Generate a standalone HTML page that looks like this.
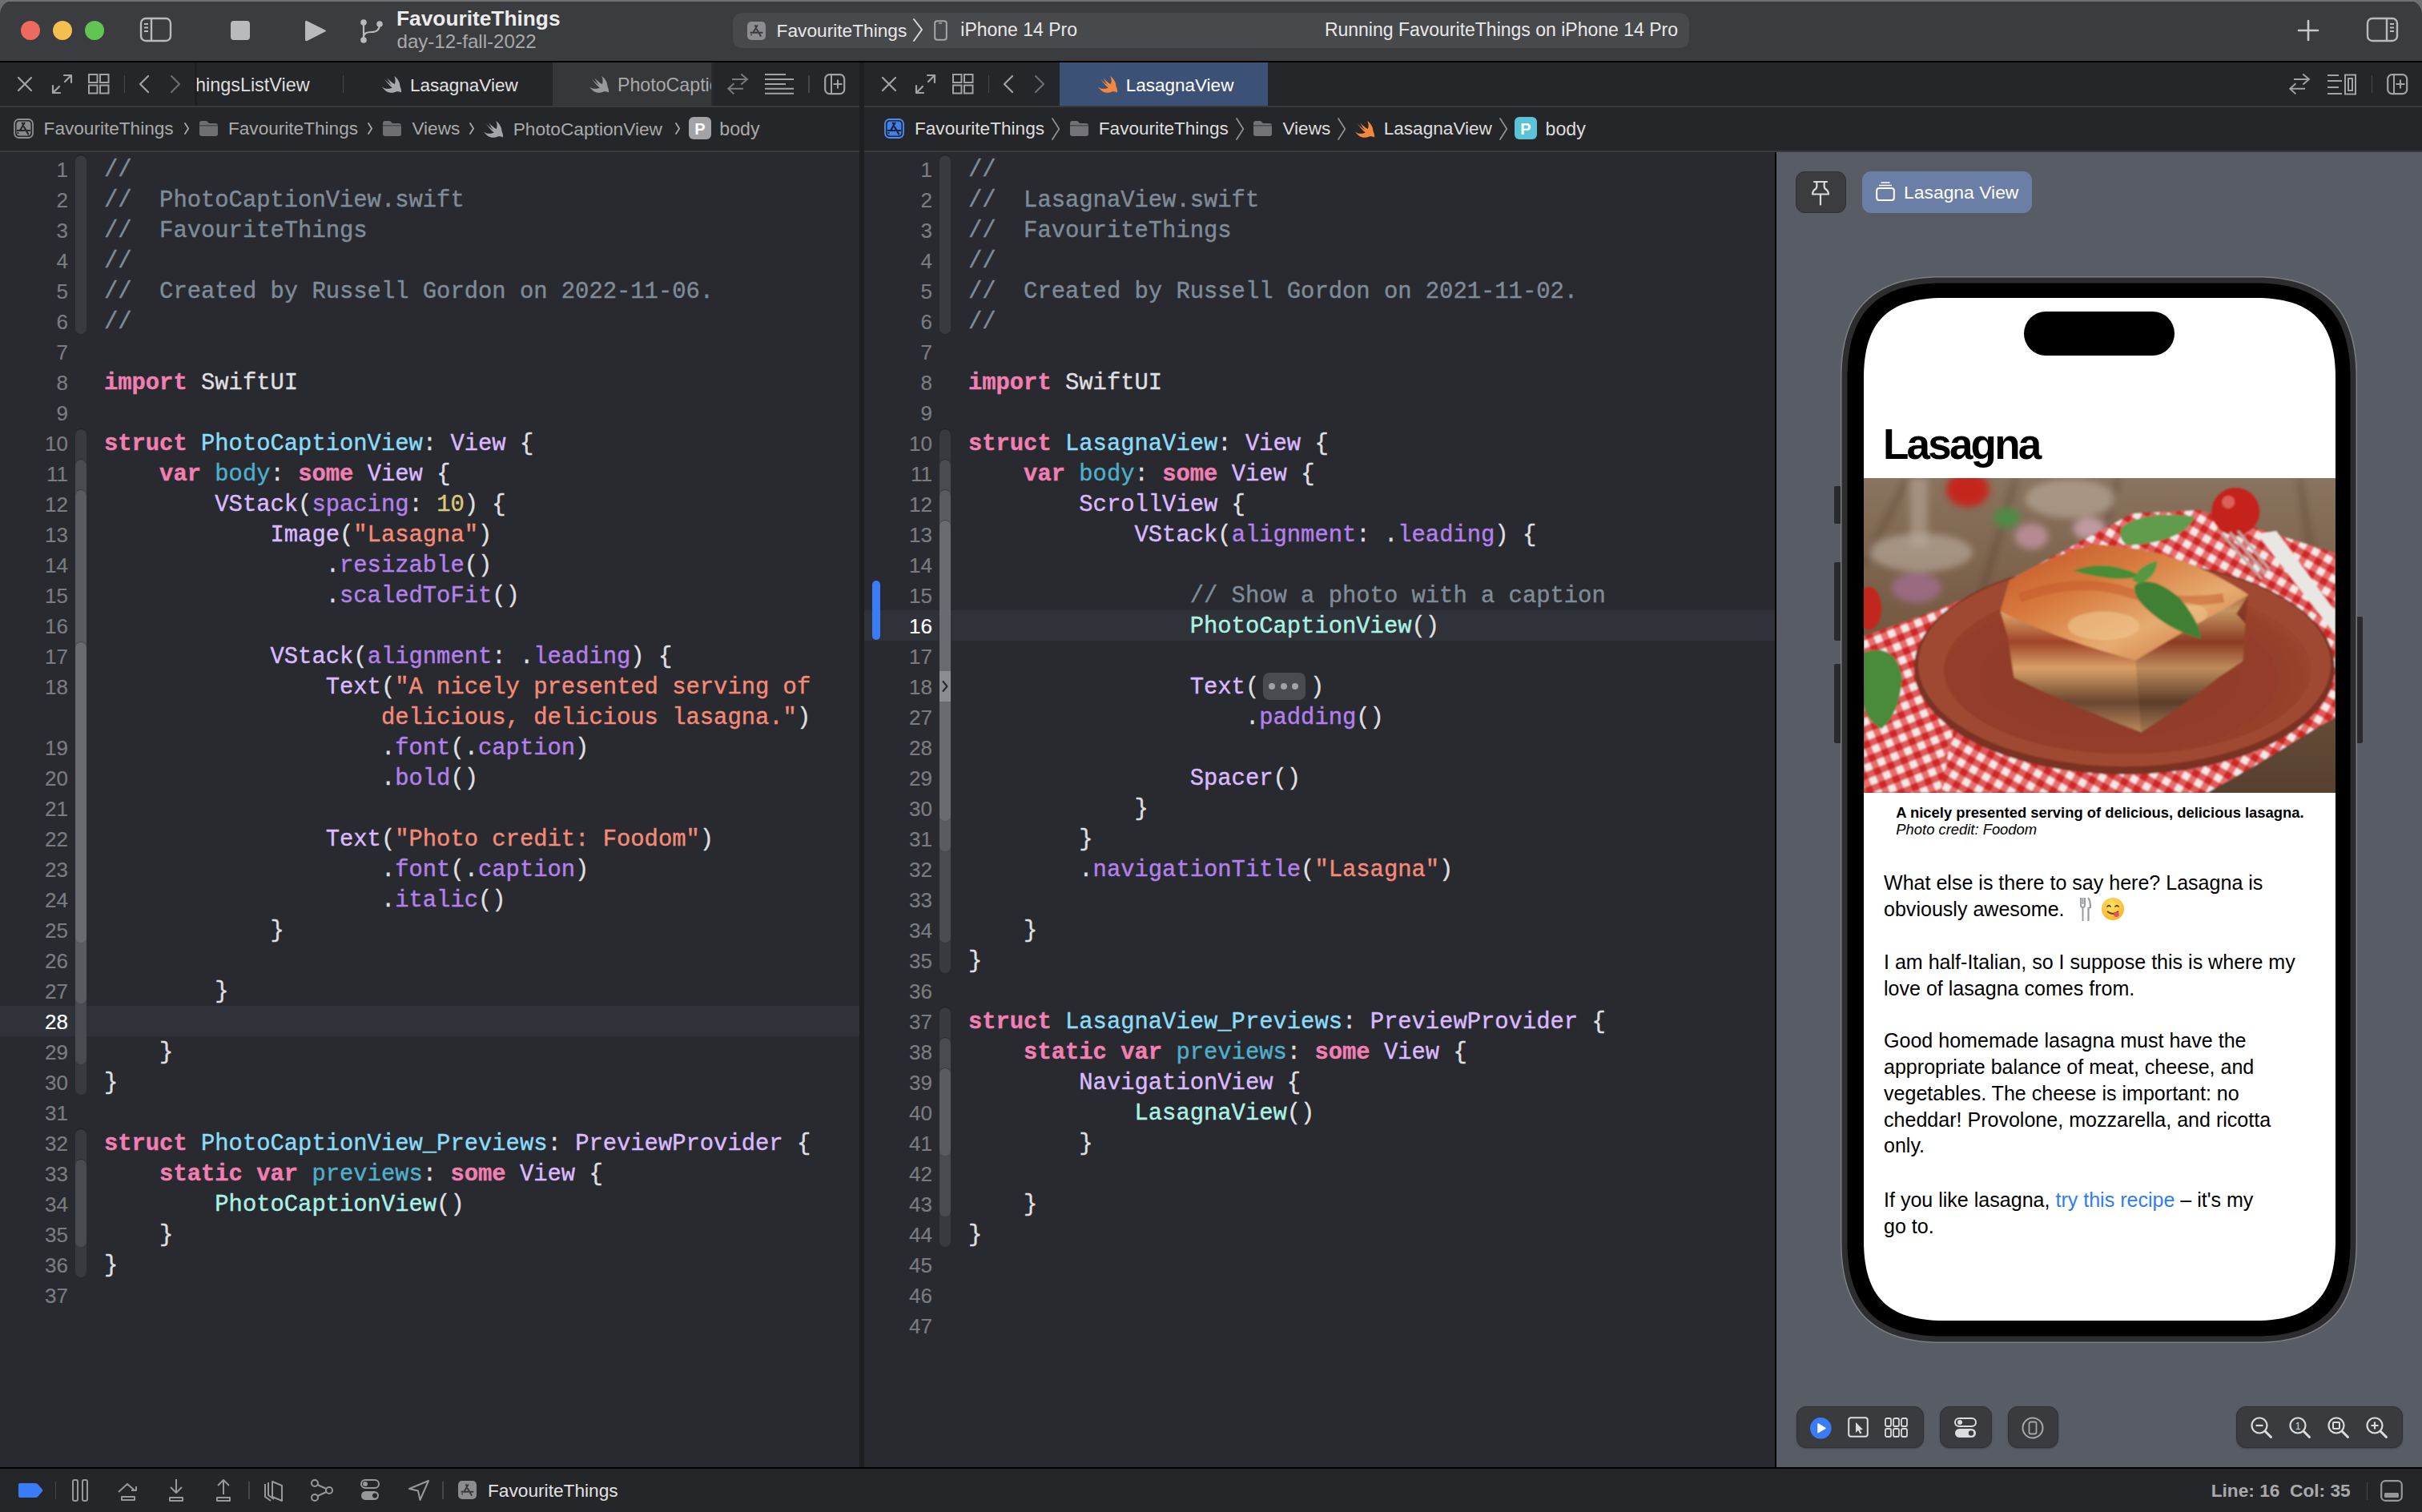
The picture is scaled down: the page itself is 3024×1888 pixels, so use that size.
<!DOCTYPE html><html><head><meta charset="utf-8"><style>
*{margin:0;padding:0;box-sizing:border-box}
html,body{width:3024px;height:1888px;overflow:hidden;background:#6d6e71}
body{position:relative;font-family:"Liberation Sans",sans-serif;-webkit-font-smoothing:antialiased}
.a{position:absolute}
.mono{font-family:"Liberation Mono",monospace}
.row{position:absolute;height:38px;line-height:38px;white-space:pre;font-family:"Liberation Mono",monospace;font-size:28.83px;color:#DFDFE0;-webkit-text-stroke:0.4px currentColor}
.ln{position:absolute;height:38px;line-height:38px;text-align:right;font-size:26px;color:#7b7c80;width:80px;-webkit-text-stroke:0.2px currentColor}
.ln.cur{color:#ffffff}
.c{color:#7F8C98}.k{color:#F07FB2;font-weight:bold}.s{color:#F48A77}.n{color:#D9C97C}
.td{color:#8ADCF8}.od{color:#4EB0CC}.pc{color:#ACF2E4}.oc{color:#DABAFF}.of{color:#B281EB}
.ui{font-family:"Liberation Sans",sans-serif;white-space:pre;position:absolute}
svg{position:absolute;overflow:visible}
</style></head><body><div class="a" style="left:0px;top:0px;width:3024px;height:76px;background:#3b3c3f;border-radius:18px 18px 0 0;"></div><div class="a" style="left:0px;top:76px;width:3024px;height:2px;background:#000;"></div><div class="a" style="left:0px;top:78px;width:3024px;height:56px;background:#252629;"></div><div class="a" style="left:0px;top:132px;width:3024px;height:2px;background:#393a3e;"></div><div class="a" style="left:0px;top:134px;width:3024px;height:56px;background:#252629;"></div><div class="a" style="left:0px;top:188px;width:3024px;height:2px;background:#393a3e;"></div><div class="a" style="left:0px;top:190px;width:3024px;height:1642px;background:#292A30;"></div><div class="a" style="left:0px;top:1832px;width:3024px;height:2px;background:#000;"></div><div class="a" style="left:0px;top:1834px;width:3024px;height:54px;background:#252629;"></div><div class="a" style="left:1073px;top:78px;width:6px;height:1754px;background:#1f1f21;"></div><div class="a" style="left:2216px;top:190px;width:808px;height:1642px;background:#585c64;"></div><div class="a" style="left:2216px;top:190px;width:2px;height:1642px;background:#000;"></div><div class="a" style="left:0px;top:1256px;width:1073px;height:38px;background:#2F3239;"></div><div class="a" style="left:1079px;top:762px;width:1137px;height:38px;background:#2F3239;"></div><div class="a" style="left:94px;top:194px;width:14px;height:223px;background:#393a3f;border-radius:7px;box-shadow:0 -1px 0 rgba(0,0,0,.25);"></div><div class="a" style="left:94px;top:536px;width:14px;height:831px;background:#393a3f;border-radius:7px;box-shadow:0 -1px 0 rgba(0,0,0,.25);"></div><div class="a" style="left:94px;top:1410px;width:14px;height:185px;background:#393a3f;border-radius:7px;box-shadow:0 -1px 0 rgba(0,0,0,.25);"></div><div class="a" style="left:94px;top:574px;width:14px;height:755px;background:#4a4b50;border-radius:7px;box-shadow:0 -1px 0 rgba(0,0,0,.25);"></div><div class="a" style="left:94px;top:1448px;width:14px;height:109px;background:#4a4b50;border-radius:7px;box-shadow:0 -1px 0 rgba(0,0,0,.25);"></div><div class="a" style="left:94px;top:612px;width:14px;height:641px;background:#5a5b60;border-radius:7px;box-shadow:0 -1px 0 rgba(0,0,0,.25);"></div><div class="a" style="left:94px;top:802px;width:14px;height:375px;background:#6a6b70;border-radius:7px;box-shadow:0 -1px 0 rgba(0,0,0,.25);"></div><div class="a" style="left:1173px;top:194px;width:14px;height:223px;background:#393a3f;border-radius:7px;box-shadow:0 -1px 0 rgba(0,0,0,.25);"></div><div class="a" style="left:1173px;top:536px;width:14px;height:679px;background:#393a3f;border-radius:7px;box-shadow:0 -1px 0 rgba(0,0,0,.25);"></div><div class="a" style="left:1173px;top:1258px;width:14px;height:299px;background:#393a3f;border-radius:7px;box-shadow:0 -1px 0 rgba(0,0,0,.25);"></div><div class="a" style="left:1173px;top:574px;width:14px;height:603px;background:#4a4b50;border-radius:7px;box-shadow:0 -1px 0 rgba(0,0,0,.25);"></div><div class="a" style="left:1173px;top:1296px;width:14px;height:223px;background:#4a4b50;border-radius:7px;box-shadow:0 -1px 0 rgba(0,0,0,.25);"></div><div class="a" style="left:1173px;top:612px;width:14px;height:451px;background:#5a5b60;border-radius:7px;box-shadow:0 -1px 0 rgba(0,0,0,.25);"></div><div class="a" style="left:1173px;top:1334px;width:14px;height:109px;background:#5a5b60;border-radius:7px;box-shadow:0 -1px 0 rgba(0,0,0,.25);"></div><div class="a" style="left:1173px;top:650px;width:14px;height:375px;background:#6a6b70;border-radius:7px;box-shadow:0 -1px 0 rgba(0,0,0,.25);"></div><div class="a" style="left:1173px;top:838px;width:14px;height:38px;background:#8b8c90;"></div><svg style="left:1173px;top:838px" width="14" height="38"><path d="M4.5 13 L9.5 19 L4.5 25" stroke="#26272b" stroke-width="2" fill="none" stroke-linecap="round" stroke-linejoin="round"/></svg><div class="a" style="left:1088.5px;top:725px;width:10.3px;height:74px;background:#3a7cf5;border-radius:5px;"></div><div class="ln" style="left:5px;top:193px">1</div><div class="row" style="left:129.9px;top:194px"><span class="c">//</span></div><div class="ln" style="left:5px;top:231px">2</div><div class="row" style="left:129.9px;top:232px"><span class="c">//  PhotoCaptionView.swift</span></div><div class="ln" style="left:5px;top:269px">3</div><div class="row" style="left:129.9px;top:270px"><span class="c">//  FavouriteThings</span></div><div class="ln" style="left:5px;top:307px">4</div><div class="row" style="left:129.9px;top:308px"><span class="c">//</span></div><div class="ln" style="left:5px;top:345px">5</div><div class="row" style="left:129.9px;top:346px"><span class="c">//  Created by Russell Gordon on 2022-11-06.</span></div><div class="ln" style="left:5px;top:383px">6</div><div class="row" style="left:129.9px;top:384px"><span class="c">//</span></div><div class="ln" style="left:5px;top:421px">7</div><div class="ln" style="left:5px;top:459px">8</div><div class="row" style="left:129.9px;top:460px"><span class="k">import</span> SwiftUI</div><div class="ln" style="left:5px;top:497px">9</div><div class="ln" style="left:5px;top:535px">10</div><div class="row" style="left:129.9px;top:536px"><span class="k">struct</span> <span class="td">PhotoCaptionView</span>: <span class="oc">View</span> {</div><div class="ln" style="left:5px;top:573px">11</div><div class="row" style="left:129.9px;top:574px">    <span class="k">var</span> <span class="od">body</span>: <span class="k">some</span> <span class="oc">View</span> {</div><div class="ln" style="left:5px;top:611px">12</div><div class="row" style="left:129.9px;top:612px">        <span class="oc">VStack</span>(<span class="of">spacing</span>: <span class="n">10</span>) {</div><div class="ln" style="left:5px;top:649px">13</div><div class="row" style="left:129.9px;top:650px">            <span class="oc">Image</span>(<span class="s">"Lasagna"</span>)</div><div class="ln" style="left:5px;top:687px">14</div><div class="row" style="left:129.9px;top:688px">                .<span class="of">resizable</span>()</div><div class="ln" style="left:5px;top:725px">15</div><div class="row" style="left:129.9px;top:726px">                .<span class="of">scaledToFit</span>()</div><div class="ln" style="left:5px;top:763px">16</div><div class="ln" style="left:5px;top:801px">17</div><div class="row" style="left:129.9px;top:802px">            <span class="oc">VStack</span>(<span class="of">alignment</span>: .<span class="of">leading</span>) {</div><div class="ln" style="left:5px;top:839px">18</div><div class="row" style="left:129.9px;top:840px">                <span class="oc">Text</span>(<span class="s">"A nicely presented serving of</span></div><div class="row" style="left:129.9px;top:878px">                    <span class="s">delicious, delicious lasagna."</span>)</div><div class="ln" style="left:5px;top:915px">19</div><div class="row" style="left:129.9px;top:916px">                    .<span class="of">font</span>(.<span class="of">caption</span>)</div><div class="ln" style="left:5px;top:953px">20</div><div class="row" style="left:129.9px;top:954px">                    .<span class="of">bold</span>()</div><div class="ln" style="left:5px;top:991px">21</div><div class="ln" style="left:5px;top:1029px">22</div><div class="row" style="left:129.9px;top:1030px">                <span class="oc">Text</span>(<span class="s">"Photo credit: Foodom"</span>)</div><div class="ln" style="left:5px;top:1067px">23</div><div class="row" style="left:129.9px;top:1068px">                    .<span class="of">font</span>(.<span class="of">caption</span>)</div><div class="ln" style="left:5px;top:1105px">24</div><div class="row" style="left:129.9px;top:1106px">                    .<span class="of">italic</span>()</div><div class="ln" style="left:5px;top:1143px">25</div><div class="row" style="left:129.9px;top:1144px">            }</div><div class="ln" style="left:5px;top:1181px">26</div><div class="ln" style="left:5px;top:1219px">27</div><div class="row" style="left:129.9px;top:1220px">        }</div><div class="ln cur" style="left:5px;top:1257px">28</div><div class="ln" style="left:5px;top:1295px">29</div><div class="row" style="left:129.9px;top:1296px">    }</div><div class="ln" style="left:5px;top:1333px">30</div><div class="row" style="left:129.9px;top:1334px">}</div><div class="ln" style="left:5px;top:1371px">31</div><div class="ln" style="left:5px;top:1409px">32</div><div class="row" style="left:129.9px;top:1410px"><span class="k">struct</span> <span class="td">PhotoCaptionView_Previews</span>: <span class="oc">PreviewProvider</span> {</div><div class="ln" style="left:5px;top:1447px">33</div><div class="row" style="left:129.9px;top:1448px">    <span class="k">static</span> <span class="k">var</span> <span class="od">previews</span>: <span class="k">some</span> <span class="oc">View</span> {</div><div class="ln" style="left:5px;top:1485px">34</div><div class="row" style="left:129.9px;top:1486px">        <span class="pc">PhotoCaptionView</span>()</div><div class="ln" style="left:5px;top:1523px">35</div><div class="row" style="left:129.9px;top:1524px">    }</div><div class="ln" style="left:5px;top:1561px">36</div><div class="row" style="left:129.9px;top:1562px">}</div><div class="ln" style="left:5px;top:1599px">37</div><div class="ln" style="left:1084px;top:193px">1</div><div class="row" style="left:1208.9px;top:194px"><span class="c">//</span></div><div class="ln" style="left:1084px;top:231px">2</div><div class="row" style="left:1208.9px;top:232px"><span class="c">//  LasagnaView.swift</span></div><div class="ln" style="left:1084px;top:269px">3</div><div class="row" style="left:1208.9px;top:270px"><span class="c">//  FavouriteThings</span></div><div class="ln" style="left:1084px;top:307px">4</div><div class="row" style="left:1208.9px;top:308px"><span class="c">//</span></div><div class="ln" style="left:1084px;top:345px">5</div><div class="row" style="left:1208.9px;top:346px"><span class="c">//  Created by Russell Gordon on 2021-11-02.</span></div><div class="ln" style="left:1084px;top:383px">6</div><div class="row" style="left:1208.9px;top:384px"><span class="c">//</span></div><div class="ln" style="left:1084px;top:421px">7</div><div class="ln" style="left:1084px;top:459px">8</div><div class="row" style="left:1208.9px;top:460px"><span class="k">import</span> SwiftUI</div><div class="ln" style="left:1084px;top:497px">9</div><div class="ln" style="left:1084px;top:535px">10</div><div class="row" style="left:1208.9px;top:536px"><span class="k">struct</span> <span class="td">LasagnaView</span>: <span class="oc">View</span> {</div><div class="ln" style="left:1084px;top:573px">11</div><div class="row" style="left:1208.9px;top:574px">    <span class="k">var</span> <span class="od">body</span>: <span class="k">some</span> <span class="oc">View</span> {</div><div class="ln" style="left:1084px;top:611px">12</div><div class="row" style="left:1208.9px;top:612px">        <span class="oc">ScrollView</span> {</div><div class="ln" style="left:1084px;top:649px">13</div><div class="row" style="left:1208.9px;top:650px">            <span class="oc">VStack</span>(<span class="of">alignment</span>: .<span class="of">leading</span>) {</div><div class="ln" style="left:1084px;top:687px">14</div><div class="ln" style="left:1084px;top:725px">15</div><div class="row" style="left:1208.9px;top:726px">                <span class="c">// Show a photo with a caption</span></div><div class="ln cur" style="left:1084px;top:763px">16</div><div class="row" style="left:1208.9px;top:764px">                <span class="pc">PhotoCaptionView</span>()</div><div class="ln" style="left:1084px;top:801px">17</div><div class="ln" style="left:1084px;top:839px">18</div><div class="row" style="left:1208.9px;top:840px">                <span class="oc">Text</span>(</div><div class="ln" style="left:1084px;top:877px">27</div><div class="row" style="left:1208.9px;top:878px">                    .<span class="of">padding</span>()</div><div class="ln" style="left:1084px;top:915px">28</div><div class="ln" style="left:1084px;top:953px">29</div><div class="row" style="left:1208.9px;top:954px">                <span class="oc">Spacer</span>()</div><div class="ln" style="left:1084px;top:991px">30</div><div class="row" style="left:1208.9px;top:992px">            }</div><div class="ln" style="left:1084px;top:1029px">31</div><div class="row" style="left:1208.9px;top:1030px">        }</div><div class="ln" style="left:1084px;top:1067px">32</div><div class="row" style="left:1208.9px;top:1068px">        .<span class="of">navigationTitle</span>(<span class="s">"Lasagna"</span>)</div><div class="ln" style="left:1084px;top:1105px">33</div><div class="ln" style="left:1084px;top:1143px">34</div><div class="row" style="left:1208.9px;top:1144px">    }</div><div class="ln" style="left:1084px;top:1181px">35</div><div class="row" style="left:1208.9px;top:1182px">}</div><div class="ln" style="left:1084px;top:1219px">36</div><div class="ln" style="left:1084px;top:1257px">37</div><div class="row" style="left:1208.9px;top:1258px"><span class="k">struct</span> <span class="td">LasagnaView_Previews</span>: <span class="oc">PreviewProvider</span> {</div><div class="ln" style="left:1084px;top:1295px">38</div><div class="row" style="left:1208.9px;top:1296px">    <span class="k">static</span> <span class="k">var</span> <span class="od">previews</span>: <span class="k">some</span> <span class="oc">View</span> {</div><div class="ln" style="left:1084px;top:1333px">39</div><div class="row" style="left:1208.9px;top:1334px">        <span class="oc">NavigationView</span> {</div><div class="ln" style="left:1084px;top:1371px">40</div><div class="row" style="left:1208.9px;top:1372px">            <span class="pc">LasagnaView</span>()</div><div class="ln" style="left:1084px;top:1409px">41</div><div class="row" style="left:1208.9px;top:1410px">        }</div><div class="ln" style="left:1084px;top:1447px">42</div><div class="ln" style="left:1084px;top:1485px">43</div><div class="row" style="left:1208.9px;top:1486px">    }</div><div class="ln" style="left:1084px;top:1523px">44</div><div class="row" style="left:1208.9px;top:1524px">}</div><div class="ln" style="left:1084px;top:1561px">45</div><div class="ln" style="left:1084px;top:1599px">46</div><div class="ln" style="left:1084px;top:1637px">47</div><div class="a" style="left:1576.6px;top:840px;width:53.2px;height:34px;background:#4a4b50;border-radius:8px;"></div><div class="a" style="left:1584.0px;top:853px;width:8px;height:8px;border-radius:4px;background:#a1a2a6"></div><div class="a" style="left:1598.5px;top:853px;width:8px;height:8px;border-radius:4px;background:#a1a2a6"></div><div class="a" style="left:1613.0px;top:853px;width:8px;height:8px;border-radius:4px;background:#a1a2a6"></div><div class="row" style="left:1636px;top:840px">)</div><div class="a" style="left:0px;top:0px;width:3024px;height:2px;background:#6f7072;"></div><div class="a" style="left:26px;top:26px;width:24px;height:24px;border-radius:12px;background:#ed6a5e"></div><div class="a" style="left:66px;top:26px;width:24px;height:24px;border-radius:12px;background:#f5bf4f"></div><div class="a" style="left:106px;top:26px;width:24px;height:24px;border-radius:12px;background:#61c554"></div><svg style="left:174px;top:21px;" width="41" height="32" viewBox="0 0 41 32"><rect x="2" y="2" width="37" height="28" rx="6" stroke="#b9babd" stroke-width="2.4" fill="none"/><path d="M15 2 L15 30" stroke="#b9babd" stroke-width="2.4"/><path d="M6 9 L11 9 M6 13.5 L11 13.5 M6 18 L11 18" stroke="#b9babd" stroke-width="1.8"/></svg><div class="a" style="left:288px;top:26px;width:24px;height:24px;background:#b9babd;border-radius:4px;"></div><svg style="left:380px;top:23px;" width="30" height="31" viewBox="0 0 30 31"><path d="M3 3 Q1 2 1 5 L1 26 Q1 29 3.5 28 L26 16.5 Q28 15.5 26 14.5 Z" fill="#b9babd"/></svg><svg style="left:448px;top:22px;" width="32" height="34" viewBox="0 0 32 34"><circle cx="6" cy="6" r="3.8" fill="#b9babd"/><circle cx="26" cy="8" r="3.8" fill="#b9babd"/><circle cx="6" cy="28" r="3.8" fill="#b9babd"/><path d="M6 6 L6 28 M26 8 Q26 18 16 18 Q6 18 6 24" stroke="#b9babd" stroke-width="2.2" fill="none"/></svg><div class="ui" style="left:495px;top:9.74px;font-size:26.3px;line-height:26.3px;color:#ececec;font-weight:bold;font-style:normal;">FavouriteThings</div><div class="ui" style="left:495.5px;top:39.5px;font-size:24.1px;line-height:24.1px;color:#a9a9ab;font-weight:normal;font-style:normal;">day-12-fall-2022</div><div class="a" style="left:915px;top:16px;width:1194px;height:44px;background:#48494c;border-radius:12px;"></div><svg style="left:933px;top:27px;" width="23" height="23" viewBox="0 0 23 23"><rect x="0" y="0" width="23" height="23" rx="5.06" fill="#8d8d90"/><path d="M12.420000000000002 5.06 L7.36 13.799999999999999 M9.89 5.06 L11.04 6.8999999999999995 M11.96 9.66 L16.79 17.94 M4.37 13.799999999999999 L12.420000000000002 13.799999999999999 M14.49 13.799999999999999 L18.630000000000003 13.799999999999999" stroke="#3a3a3d" stroke-width="1.955" stroke-linecap="round"/><circle cx="5.06" cy="16.56" r="1.035" fill="#3a3a3d"/></svg><div class="ui" style="left:969.6px;top:26.58px;font-size:22.7px;line-height:22.7px;color:#e8e8e8;font-weight:normal;font-style:normal;">FavouriteThings</div><svg style="left:1139px;top:22px;" width="14" height="32" viewBox="0 0 14 32"><path d="M2 2 L12 15 L2 29" stroke="#d8d8da" stroke-width="2" fill="none" stroke-linecap="round"/></svg><svg style="left:1166px;top:25px;" width="18" height="26" viewBox="0 0 18 26"><rect x="1.2" y="1.2" width="14.6" height="23.6" rx="3" stroke="#a5a5a8" stroke-width="2" fill="none"/><path d="M6 4 L10 4" stroke="#a5a5a8" stroke-width="1.5"/></svg><div class="ui" style="left:1199.3px;top:26.33px;font-size:23.0px;line-height:23.0px;color:#e8e8e8;font-weight:normal;font-style:normal;">iPhone 14 Pro</div><div class="ui" style="left:1500px;width:595px;text-align:right;top:26.330499999999994px;font-size:23px;line-height:23px;color:#e8e8e8">Running FavouriteThings on iPhone 14 Pro</div><svg style="left:2868px;top:24px;" width="28" height="28" viewBox="0 0 28 28"><path d="M14 2 L14 26 M2 14 L26 14" stroke="#c8c8ca" stroke-width="2.6" stroke-linecap="round"/></svg><svg style="left:2954px;top:21px;" width="41" height="32" viewBox="0 0 41 32"><rect x="2" y="2" width="37" height="28" rx="6" stroke="#b9babd" stroke-width="2.4" fill="none"/><path d="M26 2 L26 30" stroke="#b9babd" stroke-width="2.4"/><path d="M30 9 L35 9 M30 13.5 L35 13.5 M30 18 L35 18" stroke="#b9babd" stroke-width="1.8"/></svg><svg style="left:21px;top:95px;" width="20" height="20" viewBox="0 0 20 20"><path d="M2 2 L18 18 M18 2 L2 18" stroke="#a3a3a6" stroke-width="2.2" stroke-linecap="round"/></svg><svg style="left:64px;top:92px;" width="27" height="26" viewBox="0 0 27 26"><path d="M16 2 L25 2 L25 11 M25 2 L17 10 M2 15 L2 24 L11 24 M2 24 L10 16" stroke="#a3a3a6" stroke-width="2.2" fill="none" stroke-linecap="round" stroke-linejoin="round"/></svg><svg style="left:110px;top:92px;" width="27" height="26" viewBox="0 0 27 26"><rect x="1" y="1.0" width="10.5" height="10" stroke="#a3a3a6" stroke-width="2" fill="none"/><rect x="1" y="14.5" width="10.5" height="10" stroke="#a3a3a6" stroke-width="2" fill="none"/><rect x="15" y="1.0" width="10.5" height="10" stroke="#a3a3a6" stroke-width="2" fill="none"/><rect x="15" y="14.5" width="10.5" height="10" stroke="#a3a3a6" stroke-width="2" fill="none"/></svg><div class="a" style="left:154.5px;top:94px;width:1.6px;height:22px;background:#47484c;"></div><svg style="left:173px;top:93px;" width="14" height="24" viewBox="0 0 14 24"><path d="M12 2 L2 12 L12 22" stroke="#a3a3a6" stroke-width="2.2" fill="none" stroke-linecap="round" stroke-linejoin="round"/></svg><svg style="left:212px;top:93px;" width="14" height="24" viewBox="0 0 14 24"><path d="M2 2 L12 12 L2 22" stroke="#6e6e72" stroke-width="2.2" fill="none" stroke-linecap="round" stroke-linejoin="round"/></svg><div class="a" style="left:689.5px;top:78px;width:201px;height:54px;background:#363739;"></div><div class="ui" style="left:244px;top:94.99px;font-size:23.4px;line-height:23.4px;color:#dedede;font-weight:normal;font-style:normal;">hingsListView</div><div class="a" style="left:243px;top:78px;width:3px;height:54px;background:#1c1c1f;opacity:.7;"></div><div class="a" style="left:427.5px;top:94px;width:1.6px;height:22px;background:#47484c;"></div><svg style="left:476.5px;top:95px;" width="24.5" height="21" viewBox="0 0 24.5 21"><g transform="scale(1.0 1.0)"><path d="M15.2 0 C19.5 3 22.5 8 22.4 12.4 C23.5 15 24.5 18 24 20.5 C22 19.5 20 19 18.1 19.3 C15 20.5 13 21 10.9 20.8 C8 20.5 5.5 19.5 3.8 17.7 C2.5 16.5 1 15 0 13.4 C2 14.8 4 15.6 6.2 15.8 C8.5 16 11 15.5 12.8 14.6 C9 11.5 5.5 7 2.8 3.4 C6 6.5 9 9 12 11.5 C9.5 8.5 8 5 6.2 2.2 C9.5 5.5 12.5 8.5 15.9 10 C17 7 16.8 3 15.2 0 Z" fill="#a9a9ab"/></g></svg><div class="ui" style="left:512px;top:95.75px;font-size:22.5px;line-height:22.5px;color:#e2e2e2;font-weight:normal;font-style:normal;">LasagnaView</div><svg style="left:736px;top:95px;" width="24.5" height="21" viewBox="0 0 24.5 21"><g transform="scale(1.0 1.0)"><path d="M15.2 0 C19.5 3 22.5 8 22.4 12.4 C23.5 15 24.5 18 24 20.5 C22 19.5 20 19 18.1 19.3 C15 20.5 13 21 10.9 20.8 C8 20.5 5.5 19.5 3.8 17.7 C2.5 16.5 1 15 0 13.4 C2 14.8 4 15.6 6.2 15.8 C8.5 16 11 15.5 12.8 14.6 C9 11.5 5.5 7 2.8 3.4 C6 6.5 9 9 12 11.5 C9.5 8.5 8 5 6.2 2.2 C9.5 5.5 12.5 8.5 15.9 10 C17 7 16.8 3 15.2 0 Z" fill="#9a9a9c"/></g></svg><div class="a" style="left:771px;top:78px;width:119px;height:54px;overflow:hidden"><div class="ui" style="left:0px;top:17.16px;font-size:23.2px;line-height:23.2px;color:#a8a8aa;font-weight:normal;font-style:normal;">PhotoCaptionView</div></div><div class="a" style="left:888px;top:78px;width:3px;height:54px;background:#2a2b2e;"></div><svg style="left:908px;top:92px;" width="27" height="27" viewBox="0 0 27 27"><path d="M6 7 L25 7 M17.3 0.5 L25 7 L17.3 13.5 M20 18.8 L1.2 18.8 M8.4 12.2 L1.2 18.8 L8.4 25.4" stroke="#7c7c80" stroke-width="1.9" fill="none" stroke-linecap="butt" stroke-linejoin="miter"/></svg><svg style="left:954px;top:92px;" width="38" height="27" viewBox="0 0 38 27"><path d="M1 1 L27 1 M1 7 L37 7 M1 12.9 L27 12.9 M1 18.8 L37 18.8 M1 24.8 L37 24.8" stroke="#a3a3a6" stroke-width="2"/></svg><div class="a" style="left:1009px;top:94px;width:1.6px;height:22px;background:#47484c;"></div><svg style="left:1028.5px;top:92px;" width="27" height="27" viewBox="0 0 27 27"><rect x="1.2" y="1.2" width="24" height="24" rx="5.5" stroke="#a3a3a6" stroke-width="2.2" fill="none"/><path d="M9 1 L9 25.5 M17 7.5 L17 18.5 M11.5 13 L22.5 13" stroke="#a3a3a6" stroke-width="2"/></svg><svg style="left:1100px;top:95px;" width="20" height="20" viewBox="0 0 20 20"><path d="M2 2 L18 18 M18 2 L2 18" stroke="#a3a3a6" stroke-width="2.2" stroke-linecap="round"/></svg><svg style="left:1142px;top:92px;" width="27" height="26" viewBox="0 0 27 26"><path d="M16 2 L25 2 L25 11 M25 2 L17 10 M2 15 L2 24 L11 24 M2 24 L10 16" stroke="#a3a3a6" stroke-width="2.2" fill="none" stroke-linecap="round" stroke-linejoin="round"/></svg><svg style="left:1189px;top:92px;" width="27" height="26" viewBox="0 0 27 26"><rect x="1" y="1.0" width="10.5" height="10" stroke="#a3a3a6" stroke-width="2" fill="none"/><rect x="1" y="14.5" width="10.5" height="10" stroke="#a3a3a6" stroke-width="2" fill="none"/><rect x="15" y="1.0" width="10.5" height="10" stroke="#a3a3a6" stroke-width="2" fill="none"/><rect x="15" y="14.5" width="10.5" height="10" stroke="#a3a3a6" stroke-width="2" fill="none"/></svg><div class="a" style="left:1233.5px;top:94px;width:1.6px;height:22px;background:#47484c;"></div><svg style="left:1252px;top:93px;" width="14" height="24" viewBox="0 0 14 24"><path d="M12 2 L2 12 L12 22" stroke="#a3a3a6" stroke-width="2.2" fill="none" stroke-linecap="round" stroke-linejoin="round"/></svg><svg style="left:1291px;top:93px;" width="14" height="24" viewBox="0 0 14 24"><path d="M2 2 L12 12 L2 22" stroke="#6e6e72" stroke-width="2.2" fill="none" stroke-linecap="round" stroke-linejoin="round"/></svg><div class="a" style="left:1322.8px;top:78px;width:260px;height:54px;background:#3b5176;"></div><svg style="left:1370.5px;top:95px;" width="24.5" height="21" viewBox="0 0 24.5 21"><g transform="scale(1.0 1.0)"><path d="M15.2 0 C19.5 3 22.5 8 22.4 12.4 C23.5 15 24.5 18 24 20.5 C22 19.5 20 19 18.1 19.3 C15 20.5 13 21 10.9 20.8 C8 20.5 5.5 19.5 3.8 17.7 C2.5 16.5 1 15 0 13.4 C2 14.8 4 15.6 6.2 15.8 C8.5 16 11 15.5 12.8 14.6 C9 11.5 5.5 7 2.8 3.4 C6 6.5 9 9 12 11.5 C9.5 8.5 8 5 6.2 2.2 C9.5 5.5 12.5 8.5 15.9 10 C17 7 16.8 3 15.2 0 Z" fill="#f0883e"/></g></svg><div class="ui" style="left:1405.7px;top:95.75px;font-size:22.5px;line-height:22.5px;color:#ffffff;font-weight:normal;font-style:normal;">LasagnaView</div><svg style="left:2858px;top:92px;" width="27" height="27" viewBox="0 0 27 27"><path d="M6 7 L25 7 M17.3 0.5 L25 7 L17.3 13.5 M20 18.8 L1.2 18.8 M8.4 12.2 L1.2 18.8 L8.4 25.4" stroke="#a3a3a6" stroke-width="1.9" fill="none" stroke-linecap="butt" stroke-linejoin="miter"/></svg><svg style="left:2905px;top:92px;" width="38" height="27" viewBox="0 0 38 27"><path d="M1 2 L15 2 M1 9 L19 9 M1 17 L15 17 M1 25 L19 25" stroke="#a3a3a6" stroke-width="2"/><rect x="23" y="1.5" width="13" height="24" stroke="#a3a3a6" stroke-width="2" fill="none"/><rect x="27" y="6" width="5" height="15" stroke="#a3a3a6" stroke-width="2" fill="none"/></svg><div class="a" style="left:2960.5px;top:94px;width:1.6px;height:22px;background:#47484c;"></div><svg style="left:2980px;top:92px;" width="27" height="27" viewBox="0 0 27 27"><rect x="1.2" y="1.2" width="24" height="24" rx="5.5" stroke="#a3a3a6" stroke-width="2.2" fill="none"/><path d="M9 1 L9 25.5 M17 7.5 L17 18.5 M11.5 13 L22.5 13" stroke="#a3a3a6" stroke-width="2"/></svg><svg style="left:17px;top:148px;" width="25" height="25" viewBox="0 0 25 25"><rect x="1" y="1" width="23" height="23" rx="5.5" fill="none" stroke="#8e8e91" stroke-width="1.8"/><rect x="3.6" y="3.6" width="17.8" height="17.8" rx="3.8499999999999996" fill="#8a8a8d"/><path d="M13.5 5.5 L8.0 15.0 M10.75 5.5 L12.0 7.5 M13.0 10.5 L18.25 19.5 M4.75 15.0 L13.5 15.0 M15.75 15.0 L20.25 15.0" stroke="#26272b" stroke-width="2.125" stroke-linecap="round"/><circle cx="5.5" cy="18.0" r="1.125" fill="#26272b"/></svg><div class="ui" style="left:54.6px;top:150.17px;font-size:22.6px;line-height:22.6px;color:#a9a9ab;font-weight:normal;font-style:normal;">FavouriteThings</div><svg style="left:229.5px;top:153px;" width="6.16" height="15" viewBox="0 0 6.16 15"><path d="M1 1 L5.16 7.5 L1 14" stroke="#a9a9ab" stroke-width="1.8" fill="none" stroke-linecap="round" stroke-linejoin="round"/></svg><svg style="left:247.5px;top:150px;" width="25" height="21" viewBox="0 0 25 21"><path d="M1 4 Q1 1 4 1 L9 1 Q11 1 12 3 L13 4 L21 4 Q24 4 24 7 L24 17 Q24 20 21 20 L4 20 Q1 20 1 17 Z" fill="#6f6f73"/><rect x="1" y="6" width="23" height="1.5" fill="#252629" opacity=".5"/></svg><div class="ui" style="left:285px;top:150.17px;font-size:22.6px;line-height:22.6px;color:#a9a9ab;font-weight:normal;font-style:normal;">FavouriteThings</div><svg style="left:459px;top:153px;" width="6.16" height="15" viewBox="0 0 6.16 15"><path d="M1 1 L5.16 7.5 L1 14" stroke="#a9a9ab" stroke-width="1.8" fill="none" stroke-linecap="round" stroke-linejoin="round"/></svg><svg style="left:477px;top:150px;" width="25" height="21" viewBox="0 0 25 21"><path d="M1 4 Q1 1 4 1 L9 1 Q11 1 12 3 L13 4 L21 4 Q24 4 24 7 L24 17 Q24 20 21 20 L4 20 Q1 20 1 17 Z" fill="#6f6f73"/><rect x="1" y="6" width="23" height="1.5" fill="#252629" opacity=".5"/></svg><div class="ui" style="left:514.4px;top:150.17px;font-size:22.6px;line-height:22.6px;color:#a9a9ab;font-weight:normal;font-style:normal;">Views</div><svg style="left:585.5px;top:153px;" width="6.16" height="15" viewBox="0 0 6.16 15"><path d="M1 1 L5.16 7.5 L1 14" stroke="#a9a9ab" stroke-width="1.8" fill="none" stroke-linecap="round" stroke-linejoin="round"/></svg><svg style="left:603.5px;top:151px;" width="24.5" height="21" viewBox="0 0 24.5 21"><g transform="scale(1.0 1.0)"><path d="M15.2 0 C19.5 3 22.5 8 22.4 12.4 C23.5 15 24.5 18 24 20.5 C22 19.5 20 19 18.1 19.3 C15 20.5 13 21 10.9 20.8 C8 20.5 5.5 19.5 3.8 17.7 C2.5 16.5 1 15 0 13.4 C2 14.8 4 15.6 6.2 15.8 C8.5 16 11 15.5 12.8 14.6 C9 11.5 5.5 7 2.8 3.4 C6 6.5 9 9 12 11.5 C9.5 8.5 8 5 6.2 2.2 C9.5 5.5 12.5 8.5 15.9 10 C17 7 16.8 3 15.2 0 Z" fill="#a5a5a7"/></g></svg><div class="ui" style="left:640.7px;top:150.08px;font-size:22.7px;line-height:22.7px;color:#a9a9ab;font-weight:normal;font-style:normal;">PhotoCaptionView</div><svg style="left:843px;top:153px;" width="6.16" height="15" viewBox="0 0 6.16 15"><path d="M1 1 L5.16 7.5 L1 14" stroke="#a9a9ab" stroke-width="1.8" fill="none" stroke-linecap="round" stroke-linejoin="round"/></svg><svg style="left:860.4px;top:146px;" width="28" height="28" viewBox="0 0 28 28"><rect width="28" height="28" rx="6" fill="#a3a3a5"/><text x="14" y="21.5" text-anchor="middle" font-family="Liberation Sans" font-weight="bold" font-size="20" fill="#fff">P</text></svg><div class="ui" style="left:898.3px;top:149.66px;font-size:23.2px;line-height:23.2px;color:#a9a9ab;font-weight:normal;font-style:normal;">body</div><svg style="left:1104px;top:148px;" width="25" height="25" viewBox="0 0 25 25"><rect x="1" y="1" width="23" height="23" rx="5.5" fill="none" stroke="#4b8cf6" stroke-width="1.8"/><rect x="3.6" y="3.6" width="17.8" height="17.8" rx="3.8499999999999996" fill="#3f80ec"/><path d="M13.5 5.5 L8.0 15.0 M10.75 5.5 L12.0 7.5 M13.0 10.5 L18.25 19.5 M4.75 15.0 L13.5 15.0 M15.75 15.0 L20.25 15.0" stroke="#1b2236" stroke-width="2.125" stroke-linecap="round"/><circle cx="5.5" cy="18.0" r="1.125" fill="#1b2236"/></svg><div class="ui" style="left:1142px;top:150.17px;font-size:22.6px;line-height:22.6px;color:#dddddf;font-weight:normal;font-style:normal;">FavouriteThings</div><svg style="left:1312.5px;top:146.5px;" width="10.32" height="28" viewBox="0 0 10.32 28"><path d="M1 1 L9.32 14.0 L1 27" stroke="#8f8f92" stroke-width="1.8" fill="none" stroke-linecap="round" stroke-linejoin="round"/></svg><svg style="left:1334.6px;top:150px;" width="25" height="21" viewBox="0 0 25 21"><path d="M1 4 Q1 1 4 1 L9 1 Q11 1 12 3 L13 4 L21 4 Q24 4 24 7 L24 17 Q24 20 21 20 L4 20 Q1 20 1 17 Z" fill="#737377"/><rect x="1" y="6" width="23" height="1.5" fill="#252629" opacity=".5"/></svg><div class="ui" style="left:1371.8px;top:150.17px;font-size:22.6px;line-height:22.6px;color:#dddddf;font-weight:normal;font-style:normal;">FavouriteThings</div><svg style="left:1543px;top:146.5px;" width="10.32" height="28" viewBox="0 0 10.32 28"><path d="M1 1 L9.32 14.0 L1 27" stroke="#8f8f92" stroke-width="1.8" fill="none" stroke-linecap="round" stroke-linejoin="round"/></svg><svg style="left:1564px;top:150px;" width="25" height="21" viewBox="0 0 25 21"><path d="M1 4 Q1 1 4 1 L9 1 Q11 1 12 3 L13 4 L21 4 Q24 4 24 7 L24 17 Q24 20 21 20 L4 20 Q1 20 1 17 Z" fill="#737377"/><rect x="1" y="6" width="23" height="1.5" fill="#252629" opacity=".5"/></svg><div class="ui" style="left:1601.4px;top:150.17px;font-size:22.6px;line-height:22.6px;color:#dddddf;font-weight:normal;font-style:normal;">Views</div><svg style="left:1669.5px;top:146.5px;" width="10.32" height="28" viewBox="0 0 10.32 28"><path d="M1 1 L9.32 14.0 L1 27" stroke="#8f8f92" stroke-width="1.8" fill="none" stroke-linecap="round" stroke-linejoin="round"/></svg><svg style="left:1691.5px;top:151px;" width="24.5" height="21" viewBox="0 0 24.5 21"><g transform="scale(1.0 1.0)"><path d="M15.2 0 C19.5 3 22.5 8 22.4 12.4 C23.5 15 24.5 18 24 20.5 C22 19.5 20 19 18.1 19.3 C15 20.5 13 21 10.9 20.8 C8 20.5 5.5 19.5 3.8 17.7 C2.5 16.5 1 15 0 13.4 C2 14.8 4 15.6 6.2 15.8 C8.5 16 11 15.5 12.8 14.6 C9 11.5 5.5 7 2.8 3.4 C6 6.5 9 9 12 11.5 C9.5 8.5 8 5 6.2 2.2 C9.5 5.5 12.5 8.5 15.9 10 C17 7 16.8 3 15.2 0 Z" fill="#f0883e"/></g></svg><div class="ui" style="left:1727.7px;top:150.17px;font-size:22.6px;line-height:22.6px;color:#dddddf;font-weight:normal;font-style:normal;">LasagnaView</div><svg style="left:1872px;top:146.5px;" width="10.32" height="28" viewBox="0 0 10.32 28"><path d="M1 1 L9.32 14.0 L1 27" stroke="#8f8f92" stroke-width="1.8" fill="none" stroke-linecap="round" stroke-linejoin="round"/></svg><svg style="left:1891.4px;top:146px;" width="28" height="28" viewBox="0 0 28 28"><rect width="28" height="28" rx="6" fill="#5ac4d6"/><text x="14" y="21.5" text-anchor="middle" font-family="Liberation Sans" font-weight="bold" font-size="20" fill="#fff">P</text></svg><div class="ui" style="left:1929.5px;top:149.66px;font-size:23.2px;line-height:23.2px;color:#dddddf;font-weight:normal;font-style:normal;">body</div><svg style="left:22px;top:1851px;" width="32" height="20" viewBox="0 0 32 20"><path d="M3 1 L22 1 Q24 1 25.5 2.5 L31 9 Q32 10 31 11 L25.5 17.5 Q24 19 22 19 L3 19 Q1 19 1 17 L1 3 Q1 1 3 1 Z" fill="#3a7cf5"/></svg><div class="a" style="left:68.5px;top:1850px;width:1.6px;height:22px;background:#46474b;"></div><svg style="left:90px;top:1847px;" width="21" height="28" viewBox="0 0 21 28"><rect x="1" y="1" width="6" height="26" rx="2" stroke="#98989b" stroke-width="2" fill="none"/><rect x="13" y="1" width="6" height="26" rx="2" stroke="#98989b" stroke-width="2" fill="none"/></svg><svg style="left:146px;top:1847px;" width="29" height="28" viewBox="0 0 29 28"><path d="M2 16 L13 6 L22 14 M18 14 L24 14 L24 9 M6 22 L22 22 L22 26 L6 26 Z" stroke="#98989b" stroke-width="2" fill="none" stroke-linejoin="round"/></svg><svg style="left:210px;top:1846px;" width="21" height="30" viewBox="0 0 21 30"><path d="M10 1 L10 18 M3 11 L10 18 L17 11 M2 24 L18 24 L18 28 L2 28 Z" stroke="#98989b" stroke-width="2" fill="none" stroke-linejoin="round"/></svg><svg style="left:269px;top:1846px;" width="21" height="30" viewBox="0 0 21 30"><path d="M10 20 L10 2 M3 9 L10 2 L17 9 M2 24 L18 24 L18 28 L2 28 Z" stroke="#98989b" stroke-width="2" fill="none" stroke-linejoin="round"/></svg><div class="a" style="left:310px;top:1850px;width:1.6px;height:22px;background:#46474b;"></div><svg style="left:329px;top:1847px;" width="26" height="29" viewBox="0 0 26 29"><path d="M2 6 L2 22 L9 27 M6 4 L6 20 L13 25 M11 3 L23 8 L23 27 L11 22 Z" stroke="#98989b" stroke-width="2" fill="none" stroke-linejoin="round"/></svg><svg style="left:387px;top:1846px;" width="30" height="30" viewBox="0 0 30 30"><circle cx="6" cy="6" r="4" stroke="#98989b" stroke-width="2" fill="none"/><circle cx="6" cy="24" r="4" stroke="#98989b" stroke-width="2" fill="none"/><circle cx="24" cy="15" r="4" stroke="#98989b" stroke-width="2" fill="none"/><path d="M9.5 8 L20.5 13 M9.5 22 L20.5 17" stroke="#98989b" stroke-width="2"/></svg><svg style="left:450px;top:1847px;" width="25" height="27" viewBox="0 0 25 27"><rect x="1" y="1" width="22" height="10" rx="5" stroke="#98989b" stroke-width="2" fill="none"/><circle cx="6" cy="6" r="3" fill="#98989b"/><rect x="1" y="15" width="22" height="11" rx="5.5" fill="#98989b"/><circle cx="18" cy="20.5" r="3" fill="#252629"/></svg><svg style="left:509px;top:1847px;" width="28" height="28" viewBox="0 0 28 28"><path d="M26 2 L2 12 L13 14.5 L15.5 26 Z" stroke="#98989b" stroke-width="2" fill="none" stroke-linejoin="round"/></svg><div class="a" style="left:552px;top:1850px;width:1.6px;height:22px;background:#46474b;"></div><svg style="left:571.8px;top:1849px;" width="23" height="23" viewBox="0 0 23 23"><rect x="0" y="0" width="23" height="23" rx="5.06" fill="#8d8d90"/><path d="M12.420000000000002 5.06 L7.36 13.799999999999999 M9.89 5.06 L11.04 6.8999999999999995 M11.96 9.66 L16.79 17.94 M4.37 13.799999999999999 L12.420000000000002 13.799999999999999 M14.49 13.799999999999999 L18.630000000000003 13.799999999999999" stroke="#3a3a3d" stroke-width="1.955" stroke-linecap="round"/><circle cx="5.06" cy="16.56" r="1.035" fill="#3a3a3d"/></svg><div class="ui" style="left:609px;top:1849.58px;font-size:22.7px;line-height:22.7px;color:#e2e2e2;font-weight:normal;font-style:normal;">FavouriteThings</div><div class="ui" style="left:2760.7px;top:1849.78px;font-size:22.7px;line-height:22.7px;color:#a9a9ab;font-weight:bold;font-style:normal;">Line: 16  Col: 35</div><div class="a" style="left:2954.5px;top:1851px;width:1.6px;height:22px;background:#46474b;"></div><svg style="left:2972px;top:1848px;" width="28" height="27" viewBox="0 0 28 27"><rect x="1.2" y="1.2" width="25.6" height="24.6" rx="5" stroke="#98989b" stroke-width="2.2" fill="none"/><rect x="5" y="16" width="18" height="6" rx="1.5" fill="#98989b"/></svg><div class="a" style="left:2242px;top:213.6px;width:62.5px;height:52.4px;background:#3b3c3e;border-radius:11px;border:1px solid #2e2f31;"></div><svg style="left:2259px;top:225px;" width="28" height="32" viewBox="0 0 28 32"><path d="M6 2 L22 2 M9 2 Q10 8 8.5 10.5 Q4 13 4 17.5 L24 17.5 Q24 13 19.5 10.5 Q18 8 19 2 M14 17.5 L14 30.5" stroke="#dcdcde" stroke-width="2.2" fill="none" stroke-linejoin="round" stroke-linecap="round"/></svg><div class="a" style="left:2324.7px;top:213.6px;width:212.6px;height:52.4px;background:#6a7ea6;border-radius:11px;"></div><svg style="left:2342px;top:226px;" width="25" height="25" viewBox="0 0 25 25"><rect x="1.2" y="9" width="21.6" height="15" rx="3" stroke="#fff" stroke-width="2" fill="none"/><path d="M4 5.5 L20 5.5 M6.5 2 L17.5 2" stroke="#fff" stroke-width="1.6"/></svg><div class="ui" style="left:2377px;top:228.82px;font-size:22.9px;line-height:22.9px;color:#ffffff;font-weight:normal;font-style:normal;">Lasagna View</div><div class="a" style="left:2290px;top:607px;width:9px;height:47px;background:#2a2a2c;border-radius:2px;"></div><div class="a" style="left:2290px;top:702px;width:9px;height:98px;background:#2a2a2c;border-radius:2px;"></div><div class="a" style="left:2290px;top:828.5px;width:9px;height:99px;background:#2a2a2c;border-radius:2px;"></div><div class="a" style="left:2942px;top:770px;width:8px;height:158px;background:#2a2a2c;border-radius:2px;"></div><svg style="left:2290px;top:340px;" width="670" height="1345" viewBox="0 0 670 1345"><path d="M134 5 H527 C613 5 653 45 653 131 V1211 C653 1297 613 1337 527 1337 H134 C48 1337 8 1297 8 1211 V131 C8 45 48 5 134 5 Z" fill="#7d7e80"/><path d="M134.0 6.5 H527.0 C612.0 6.5 651.5 46.0 651.5 131.0 V1211.0 C651.5 1296.0 612.0 1335.5 527.0 1335.5 H134.0 C49.0 1335.5 9.5 1296.0 9.5 1211.0 V131.0 C9.5 46.0 49.0 6.5 134.0 6.5 Z" fill="#2d2d2f"/><path d="M134.5 13.5 H526.5 C607.5 13.5 644.5 50.5 644.5 131.5 V1210.5 C644.5 1291.5 607.5 1328.5 526.5 1328.5 H134.5 C53.5 1328.5 16.5 1291.5 16.5 1210.5 V131.5 C16.5 50.5 53.5 13.5 134.5 13.5 Z" fill="#000"/><path d="M137 32 H526 C596 32 626 62 626 132 V1209 C626 1279 596 1309 526 1309 H137 C67 1309 37 1279 37 1209 V132 C37 62 67 32 137 32 Z" fill="#fff"/></svg><div class="a" style="left:2527px;top:389px;width:188px;height:55px;background:#000;border-radius:27.5px;"></div><div class="ui" style="left:2351px;top:528.14px;font-size:53px;line-height:53px;color:#000;font-weight:bold;font-style:normal;letter-spacing:-2.8px;">Lasagna</div><svg style="left:2327px;top:596.5px;overflow:hidden" width="589" height="393" viewBox="0 0 590 394" preserveAspectRatio="none">
<defs>
<pattern id="chk" width="18" height="18" patternUnits="userSpaceOnUse" patternTransform="rotate(30)">
<rect width="18" height="18" fill="#f2e9e7"/><rect width="9" height="9" fill="#d02828"/><rect x="9" y="0" width="9" height="9" fill="#e05a5a"/><rect x="0" y="9" width="9" height="9" fill="#e86e6e"/>
</pattern>
<pattern id="chk2" width="18" height="18" patternUnits="userSpaceOnUse" patternTransform="rotate(-22)">
<rect width="18" height="18" fill="#f2e9e7"/><rect width="9" height="9" fill="#d02828"/><rect x="9" y="0" width="9" height="9" fill="#e05a5a"/><rect x="0" y="9" width="9" height="9" fill="#e86e6e"/>
</pattern>
<linearGradient id="wood" x1="0" y1="0" x2="0" y2="1"><stop offset="0" stop-color="#8a745f"/><stop offset=".5" stop-color="#745840"/><stop offset="1" stop-color="#56402e"/></linearGradient>
<radialGradient id="plate" cx=".45" cy=".55" r=".65"><stop offset="0" stop-color="#8a3b28"/><stop offset=".75" stop-color="#963f2a"/><stop offset="1" stop-color="#a34c34"/></radialGradient>
<linearGradient id="lasTop" x1="0" y1="0" x2="1" y2="1"><stop offset="0" stop-color="#c2552a"/><stop offset=".35" stop-color="#d87a3e"/><stop offset=".65" stop-color="#e6ac70"/><stop offset="1" stop-color="#c86a34"/></linearGradient>
<linearGradient id="layers" x1="0" y1="0" x2="0" y2="1">
<stop offset="0" stop-color="#dc9a5c"/><stop offset=".2" stop-color="#b44a26"/><stop offset=".35" stop-color="#e0ab70"/><stop offset=".52" stop-color="#a04428"/><stop offset=".66" stop-color="#d9a068"/><stop offset=".84" stop-color="#6a4630"/><stop offset="1" stop-color="#b98a5c"/>
</linearGradient>
<filter id="bl" x="-30%" y="-30%" width="160%" height="160%"><feGaussianBlur stdDeviation="4"/></filter>
<filter id="bl1" x="-10%" y="-10%" width="120%" height="120%"><feGaussianBlur stdDeviation="0.8"/></filter>
</defs>
<rect width="590" height="394" fill="url(#wood)"/>
<g filter="url(#bl)">
<path d="M55 0 L0 110 M190 0 L140 170 M318 0 L300 70 M545 0 L560 95" stroke="#4a3526" stroke-width="5" opacity=".5"/>
<ellipse cx="72" cy="93" rx="64" ry="24" fill="#c2b6aa" opacity=".55"/>
<rect x="58" y="0" width="22" height="86" fill="#b9ab9d" opacity=".55"/>
<ellipse cx="258" cy="26" rx="56" ry="24" fill="#c2b4a6" opacity=".55"/>
<ellipse cx="130" cy="14" rx="27" ry="22" fill="#c4261a"/>
<ellipse cx="66" cy="137" rx="31" ry="19" fill="#9a6a80"/>
<ellipse cx="210" cy="73" rx="21" ry="16" fill="#b68a92"/>
<ellipse cx="282" cy="63" rx="20" ry="14" fill="#bf9aa0"/>
<ellipse cx="179" cy="50" rx="17" ry="12" fill="#4e8c44"/>
</g>
<g filter="url(#bl1)">
<path d="M0 198 L90 166 L200 118 L336 44 L420 40 L590 94 L590 300 L568 312 L495 357 L430 394 L0 394 Z" fill="url(#chk)"/>
<path d="M0 198 L90 166 L150 140 L95 394 L0 394 Z" fill="url(#chk2)"/>
<circle cx="465" cy="42" r="30" fill="#c5241a"/><circle cx="456" cy="30" r="8" fill="#e98a80" opacity=".6"/>
<ellipse cx="6" cy="163" rx="16" ry="27" fill="#c3281c"/>
<path d="M492 70 L516 66 L590 168 L590 196 Z" fill="#e9e7e4"/>
<path d="M448 70 L498 126 M458 68 L503 120 M468 66 L507 114" stroke="#b5aea6" stroke-width="3"/>
<path d="M322 62 Q350 40 414 48 Q400 80 330 84 Q318 78 322 62 Z" fill="#5e9c4c"/>
<ellipse cx="326" cy="237" rx="263" ry="134" fill="#7a3323"/>
<ellipse cx="326" cy="233" rx="258" ry="128" fill="#a04a33"/>
<ellipse cx="330" cy="240" rx="230" ry="106" fill="url(#plate)"/>
<path d="M182 128 Q230 98 287 83 Q340 86 375 96 Q430 112 481 146 L466 170 L477 182 L474 229 L443 250 Q400 285 347 318 L313 305 Q250 280 188 250 L180 198 L171 167 Z" fill="url(#layers)"/>
<path d="M340 228 L481 146 L477 182 L474 229 L443 250 Q400 285 347 318 Z" fill="#000" opacity=".12"/>
<path d="M182 128 Q230 98 287 83 Q340 86 375 96 Q430 112 481 146 Q420 180 340 228 Q250 205 171 167 Z" fill="url(#lasTop)"/>
<path d="M195 150 Q260 125 320 140 Q380 160 450 150" stroke="#c4582a" stroke-width="12" fill="none" opacity=".5"/>
<ellipse cx="300" cy="185" rx="45" ry="18" fill="#efc68e" opacity=".6"/><ellipse cx="400" cy="170" rx="30" ry="14" fill="#f0c890" opacity=".5"/>
<path d="M262 116 Q300 100 347 122 Q320 132 262 116 Z" fill="#4a8c36"/>
<path d="M339 134 Q360 120 395 150 Q420 180 422 201 Q380 190 350 160 Q336 145 339 134 Z" fill="#3f8030"/>
<path d="M336 128 Q345 108 367 104 Q366 124 345 132 Z" fill="#54983f"/>
<path d="M0 218 Q40 205 48 250 Q45 295 22 314 Q0 300 0 280 Z" fill="#4a8a3a"/>
</g>
</svg><div class="ui" style="left:2367.3px;top:1006.32px;font-size:18.4px;line-height:18.4px;color:#000;font-weight:bold;font-style:normal;">A nicely presented serving of delicious, delicious lasagna.</div><div class="ui" style="left:2367.3px;top:1027.32px;font-size:18.4px;line-height:18.4px;color:#000;font-weight:normal;font-style:italic;">Photo credit: Foodom</div><div class="ui" style="left:2352px;top:1089.8px;font-size:25.05px;line-height:25.05px;color:#000;font-weight:normal;font-style:normal;">What else is there to say here? Lasagna is</div><div class="ui" style="left:2352px;top:1122.6px;font-size:25.05px;line-height:25.05px;color:#000;font-weight:normal;font-style:normal;">obviously awesome.</div><div class="ui" style="left:2352px;top:1189.0px;font-size:25.05px;line-height:25.05px;color:#000;font-weight:normal;font-style:normal;">I am half-Italian, so I suppose this is where my</div><div class="ui" style="left:2352px;top:1221.8px;font-size:25.05px;line-height:25.05px;color:#000;font-weight:normal;font-style:normal;">love of lasagna comes from.</div><div class="ui" style="left:2352px;top:1287.2px;font-size:25.05px;line-height:25.05px;color:#000;font-weight:normal;font-style:normal;">Good homemade lasagna must have the</div><div class="ui" style="left:2352px;top:1320.0px;font-size:25.05px;line-height:25.05px;color:#000;font-weight:normal;font-style:normal;">appropriate balance of meat, cheese, and</div><div class="ui" style="left:2352px;top:1352.8px;font-size:25.05px;line-height:25.05px;color:#000;font-weight:normal;font-style:normal;">vegetables. The cheese is important: no</div><div class="ui" style="left:2352px;top:1385.6px;font-size:25.05px;line-height:25.05px;color:#000;font-weight:normal;font-style:normal;">cheddar! Provolone, mozzarella, and ricotta</div><div class="ui" style="left:2352px;top:1418.4px;font-size:25.05px;line-height:25.05px;color:#000;font-weight:normal;font-style:normal;">only.</div><div class="ui" style="left:2352px;top:1485.8px;font-size:25.05px;line-height:25.05px;color:#000;font-weight:normal;font-style:normal;">If you like lasagna, </div><div class="ui" style="left:2352px;top:1485.795175px;font-size:25.05px;line-height:25.05px;color:#000"><span style="visibility:hidden">If you like lasagna, </span><span style="color:#2f7bf5">try this recipe</span> – it's my</div><div class="ui" style="left:2352px;top:1518.6px;font-size:25.05px;line-height:25.05px;color:#000;font-weight:normal;font-style:normal;">go to.</div><svg style="left:2595px;top:1120px;" width="16" height="32" viewBox="0 0 16 32"><path d="M3 1 L3 10 Q3 13 5.5 13 L5.5 30 M8 1 L8 10 Q8 13 5.5 13 M5.5 1 L5.5 9" stroke="#9a9ca0" stroke-width="2" fill="none"/><path d="M12 1 Q15 4 15 13 L12.5 14 L12.5 30" stroke="#9a9ca0" stroke-width="2.2" fill="none"/></svg><svg style="left:2623px;top:1120px;" width="32" height="32" viewBox="0 0 32 32"><defs><radialGradient id="yf" cx=".45" cy=".35" r=".7"><stop offset="0" stop-color="#ffe26a"/><stop offset="1" stop-color="#f5b324"/></radialGradient></defs><circle cx="15" cy="15" r="14" fill="url(#yf)"/><path d="M8 12 Q10 9.5 12 12 M18 12 Q20 9.5 22 12" stroke="#6b3e12" stroke-width="1.8" fill="none" stroke-linecap="round"/><path d="M8 18 Q15 24 22 18" stroke="#6b3e12" stroke-width="1.8" fill="none"/><ellipse cx="19.5" cy="22" rx="3.5" ry="3" fill="#e8506a"/></svg><div class="a" style="left:2242.5px;top:1756px;width:159px;height:52.2px;background:#3a3b3e;border-radius:12px;border:1px solid #2f3033;box-shadow:0 1px 2px rgba(0,0,0,.25);"></div><div class="a" style="left:2422px;top:1756px;width:64.8px;height:52.2px;background:#3a3b3e;border-radius:12px;border:1px solid #2f3033;box-shadow:0 1px 2px rgba(0,0,0,.25);"></div><div class="a" style="left:2507px;top:1756px;width:63px;height:52.2px;background:#3a3b3e;border-radius:12px;border:1px solid #2f3033;box-shadow:0 1px 2px rgba(0,0,0,.25);"></div><div class="a" style="left:2792px;top:1756px;width:207.6px;height:52.2px;background:#3a3b3e;border-radius:12px;border:1px solid #2f3033;box-shadow:0 1px 2px rgba(0,0,0,.25);"></div><svg style="left:2259.5px;top:1769.5px;" width="27" height="27" viewBox="0 0 27 27"><circle cx="13.3" cy="13.3" r="13.3" fill="#3a7cf5"/><path d="M10 8 L19 13.3 L10 18.6 Z" fill="#fff" stroke="#fff" stroke-width="1.5" stroke-linejoin="round"/></svg><svg style="left:2307px;top:1769px;" width="27" height="27" viewBox="0 0 27 27"><rect x="1.2" y="1.2" width="23.6" height="23.6" rx="3" stroke="#dcdcde" stroke-width="2" fill="none"/><path d="M10 7 L10 20 L13 17 L15.5 21.5 L17.5 20.5 L15 16.5 L19 16 Z" fill="#dcdcde"/></svg><svg style="left:2353px;top:1770px;" width="30" height="26" viewBox="0 0 30 26"><rect x="1" y="1" width="7" height="10" rx="2" stroke="#dcdcde" stroke-width="1.8" fill="none"/><rect x="1" y="14" width="7" height="10" rx="2" stroke="#dcdcde" stroke-width="1.8" fill="none"/><rect x="11" y="1" width="7" height="10" rx="2" stroke="#dcdcde" stroke-width="1.8" fill="none"/><rect x="11" y="14" width="7" height="10" rx="2" stroke="#dcdcde" stroke-width="1.8" fill="none"/><rect x="21" y="1" width="7" height="10" rx="2" stroke="#dcdcde" stroke-width="1.8" fill="none"/><rect x="21" y="14" width="7" height="10" rx="2" stroke="#dcdcde" stroke-width="1.8" fill="none"/></svg><svg style="left:2440px;top:1770px;" width="28" height="26" viewBox="0 0 28 26"><rect x="1" y="1" width="26" height="10" rx="5" stroke="#dcdcde" stroke-width="2" fill="none"/><circle cx="7" cy="6" r="3" fill="#dcdcde"/><rect x="1" y="14" width="26" height="11" rx="5.5" fill="#dcdcde"/><circle cx="21" cy="19.5" r="3.2" fill="#3a3b3e"/></svg><svg style="left:2524px;top:1769px;" width="28" height="28" viewBox="0 0 28 28"><circle cx="14" cy="14" r="12.5" stroke="#a8a8ab" stroke-width="2" fill="none"/><rect x="9.5" y="6.5" width="9" height="15" rx="2" stroke="#a8a8ab" stroke-width="1.8" fill="none"/></svg><svg style="left:2810px;top:1769px;" width="28" height="28" viewBox="0 0 28 28"><circle cx="11" cy="11" r="9.5" stroke="#dcdcde" stroke-width="2.2" fill="none"/><path d="M18 18 L25.5 25.5" stroke="#dcdcde" stroke-width="3" stroke-linecap="round"/><path d="M6.5 11 L15.5 11" stroke="#dcdcde" stroke-width="2.2"/></svg><svg style="left:2857.5px;top:1769px;" width="28" height="28" viewBox="0 0 28 28"><circle cx="11" cy="11" r="9.5" stroke="#dcdcde" stroke-width="2.2" fill="none"/><path d="M18 18 L25.5 25.5" stroke="#dcdcde" stroke-width="3" stroke-linecap="round"/><text x="11" y="15.5" text-anchor="middle" font-family="Liberation Sans" font-size="12" fill="#dcdcde">1</text></svg><svg style="left:2906px;top:1769px;" width="28" height="28" viewBox="0 0 28 28"><circle cx="11" cy="11" r="9.5" stroke="#dcdcde" stroke-width="2.2" fill="none"/><path d="M18 18 L25.5 25.5" stroke="#dcdcde" stroke-width="3" stroke-linecap="round"/><rect x="7" y="7" width="8" height="8" rx="1" stroke="#dcdcde" stroke-width="2" fill="none"/></svg><svg style="left:2954px;top:1769px;" width="28" height="28" viewBox="0 0 28 28"><circle cx="11" cy="11" r="9.5" stroke="#dcdcde" stroke-width="2.2" fill="none"/><path d="M18 18 L25.5 25.5" stroke="#dcdcde" stroke-width="3" stroke-linecap="round"/><path d="M6.5 11 L15.5 11 M11 6.5 L11 15.5" stroke="#dcdcde" stroke-width="2.2"/></svg></body></html>
